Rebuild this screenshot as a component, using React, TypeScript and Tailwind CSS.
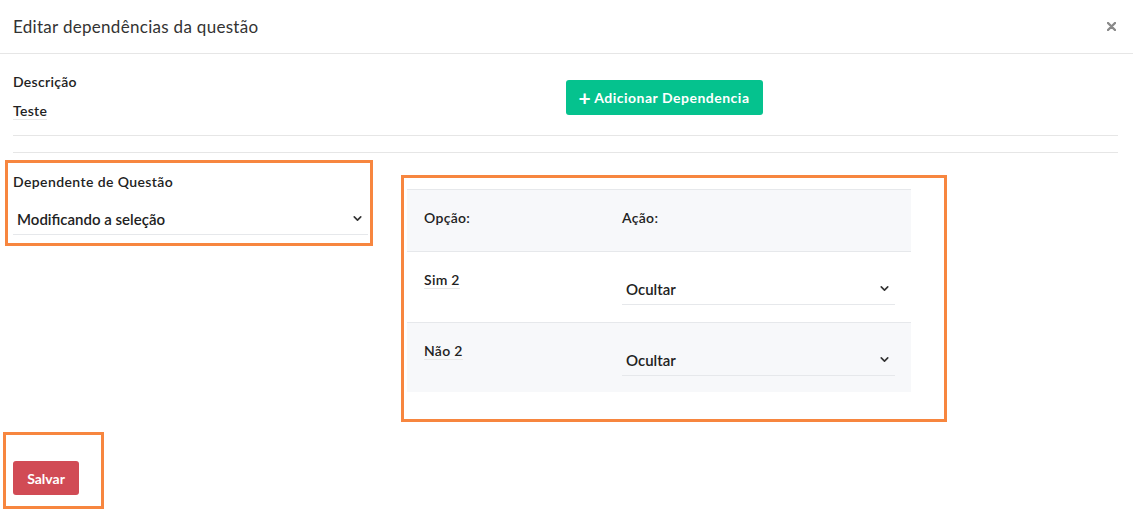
import React from "react";
import { ChevronDown } from "lucide-react";

function Select({ value, className = "" }: { value: string; className?: string }) {
  return (
    <div className={`flex h-[32px] items-center justify-between border-b border-[#e6e8eb] ${className}`}>
      <span className="pl-[4px] text-[15px] font-semibold leading-[18px] text-[#222]">{value}</span>
      <ChevronDown size={13} strokeWidth={3} className="mr-[4px] text-[#333]" />
    </div>
  );
}

export default function App() {
  return (
    <div className="h-[509px] w-full overflow-hidden bg-white text-[#222]" style={{ fontFamily: "Lato, 'Noto Sans', sans-serif" }}>
      <div className="flex h-[54px] items-center justify-between border-b border-[#e6e6e6] pl-[13px] pr-[16px]">
        <h1 className="text-[17px] font-normal tracking-[0.3px] text-[#333]">Editar dependências da questão</h1>
        <svg width="9" height="9" viewBox="0 0 9 9" className="mr-[1px]">
          <path d="M1 1 L8 8 M8 1 L1 8" stroke="#8a8a8a" strokeWidth="2.4" strokeLinecap="round" />
        </svg>
      </div>
      <div className="pl-[13px] pr-[15px]">
        <div className="grid grid-cols-2 border-b border-[#e6e6e6] pb-[15px] pt-[19px]">
          <div className="flex flex-col items-start">
            <span className="text-[14px] font-semibold leading-[18px] tracking-[0.3px]">Descrição</span>
            <span className="mt-[11px] border-b border-[#e8e8e8] text-[14px] font-semibold leading-[17px] tracking-[0.3px]">Teste</span>
          </div>
          <div className="pt-[7px]">
            <button className="flex h-[35px] items-center gap-[3px] rounded-[3px] bg-[#05c28e] px-[13px] text-[14px] font-bold tracking-[0.5px] text-white">
              <span className="text-[21px] font-bold leading-none">+</span>
              Adicionar Dependencia
            </button>
          </div>
        </div>
        <div className="mt-[16px] border-t border-[#e6e6e6]" />
        <div className="mt-[7px] flex items-start">
          <div className="-ml-[8px] h-[86px] w-[368px] border-[3px] border-[#f7863f] pl-[5px] pr-[2px] pt-[10px]">
            <div className="text-[14px] font-semibold leading-[18px] tracking-[0.4px]">Dependente de Questão</div>
            <Select value="Modificando a seleção" className="mt-[12px]" />
          </div>
          <div className="ml-[28px] mt-[15px] w-[546px] border-[3px] border-[#f7863f] pb-[27px] pl-[3px] pt-[11px]">
            <div className="w-[504px]">
              <div className="flex h-[62px] border-t border-[#e6e8eb] bg-[#f7f8fa] pt-[19px]">
                <div className="w-[215px] pl-[17px] text-[14px] font-semibold leading-[18px] tracking-[0.3px]">Opção:</div>
                <div className="flex-1 text-[14px] font-semibold leading-[18px] tracking-[0.3px]">Ação:</div>
              </div>
              <div className="flex h-[71px] border-t border-[#e6e8eb] bg-white pt-[18px]">
                <div className="w-[215px] pl-[17px] leading-[18px]">
                  <span className="border-b border-[#e8e8e8] text-[14px] font-semibold leading-[17px] tracking-[0.3px]">Sim 2</span>
                </div>
                <div className="flex-1 pr-[16px]">
                  <Select value="Ocultar" className="mt-[3px]" />
                </div>
              </div>
              <div className="flex h-[70px] border-t border-[#e6e8eb] bg-[#f7f8fa] pt-[18px]">
                <div className="w-[215px] pl-[17px] leading-[18px]">
                  <span className="border-b border-[#e8e8e8] text-[14px] font-semibold leading-[17px] tracking-[0.3px]">Não 2</span>
                </div>
                <div className="flex-1 pr-[16px]">
                  <Select value="Ocultar" className="mt-[3px]" />
                </div>
              </div>
            </div>
          </div>
        </div>
        <div className="-ml-[10px] mt-[10px] h-[77px] w-[101px] border-[3px] border-[#f7863f] pl-[7px] pt-[26px]">
          <button className="flex h-[34px] w-[66px] items-center justify-center rounded-[3px] bg-[#d14b55] text-[14px] font-bold text-white">
            Salvar
          </button>
        </div>
      </div>
    </div>
  );
}
